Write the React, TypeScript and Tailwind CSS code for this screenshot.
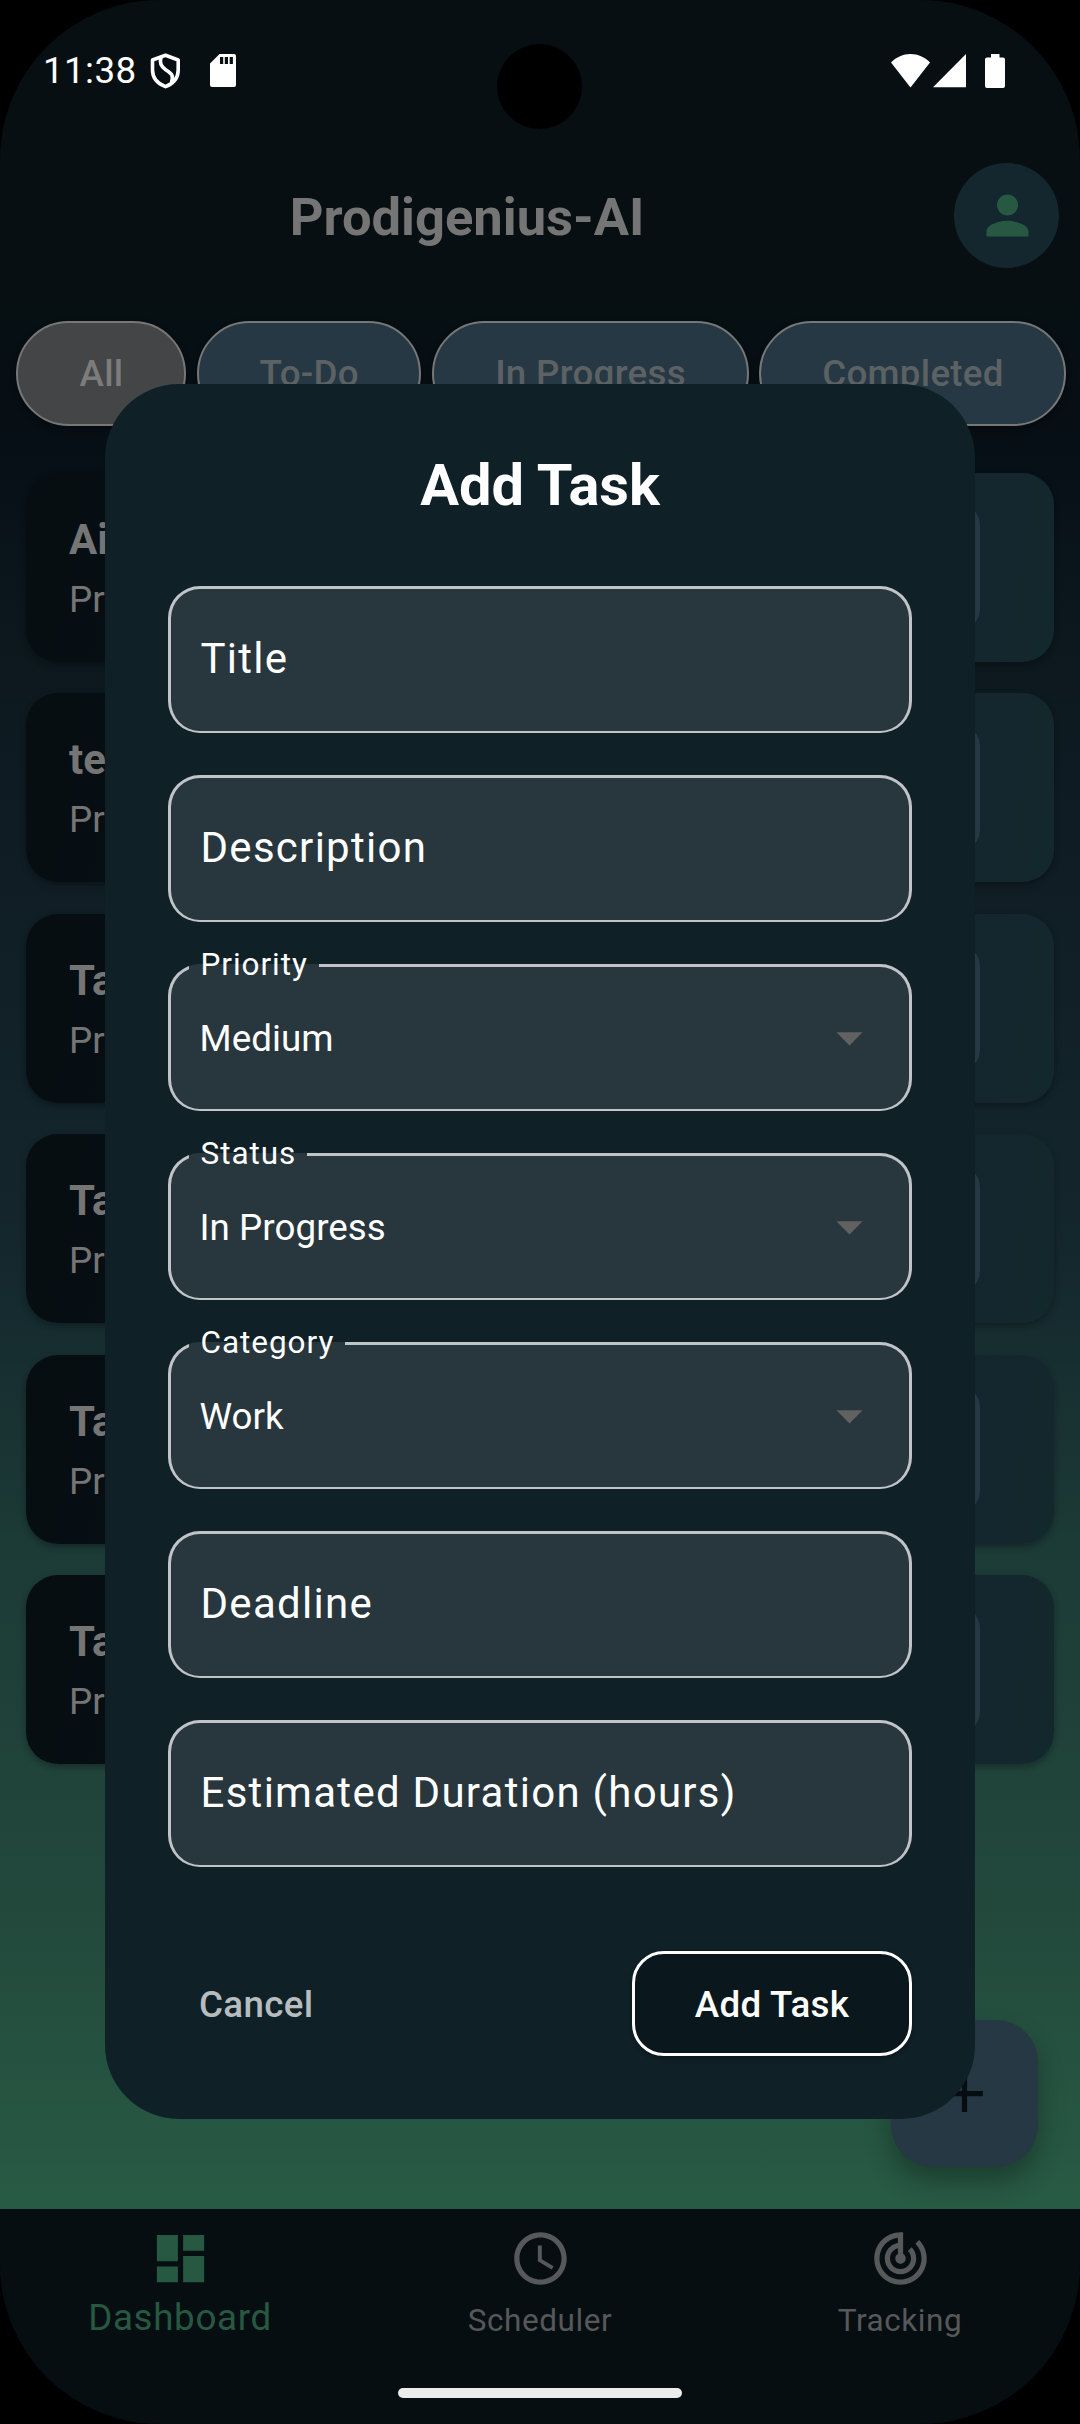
import type { ReactNode } from "react";
import { MdAccessTime, MdAdd, MdArrowDropDown, MdDashboard, MdPerson, MdTrackChanges } from "react-icons/md";

const chips = [
  { label: "All", box: "w-[170px] bg-[#444546] text-[#7c7c7c]" },
  { label: "To-Do", box: "w-[224.500px] bg-[#253843] text-[#5c6163]" },
  { label: "In Progress", box: "w-[317px] bg-[#253843] text-[#5c6163]" },
  { label: "Completed", box: "w-[307px] bg-[#253843] text-[#5c6163]" },
];

const tasks = ["Ai", "te", "Ta", "Ta", "Ta", "Ta"];

function StatusBar() {
  return (
    <div className="flex h-[142px] items-start justify-between pt-[49px] pr-[75px] pl-[43px]">
      <div className="flex items-center">
        <span className="w-[107px] text-[36.75px] leading-[43px] tracking-[0.4px] text-white">11:38</span>
        <svg className="mt-px h-[36px] w-[31px]" viewBox="0 0 31 36" fill="none" stroke="white" strokeWidth="3.6" strokeLinejoin="round">
          <path d="M15.5 2.3 28.2 7v10c0 7.500-4.600 13.500-12.700 16.700C7.400 30.500 2.500 24.500 2.500 17V7Z" />
          <path d="M11 4.500c-2 6 .500 9.500 5 12.500 5.500 3.500 8 5.500 5.500 12.500" />
        </svg>
        <svg className="ml-[29px] h-[33px] w-[26px]" viewBox="0 0 26 33" fill="white">
          <path fillRule="evenodd" d="M9.500 0H24a2 2 0 0 1 2 2v29a2 2 0 0 1-2 2H2a2 2 0 0 1-2-2V9.500ZM10 3v7h3.200V3Zm4.800 0v7H18V3Zm4.900 0v7h3.200V3Z" />
        </svg>
      </div>
      <div className="mt-[5px] flex">
        <svg className="h-[34px] w-[39px]" viewBox="0 0 39 34" fill="white">
          <path d="M0 8.500C5.500 3 12 0 19.500 0S33.500 3 39 8.500L19.500 33.500Z" />
        </svg>
        <svg className="ml-[3px] h-[34px] w-[33px]" viewBox="0 0 33 34" fill="white">
          <path d="M33 0v33.300H0Z" />
        </svg>
        <svg className="ml-[19px] h-[34px] w-[20px]" viewBox="0 0 20 34" fill="white">
          <path d="M6 0h8.500v3.500H18a2 2 0 0 1 2 2V32a2 2 0 0 1-2 2H2a2 2 0 0 1-2-2V5.500a2 2 0 0 1 2-2h4Z" />
        </svg>
      </div>
    </div>
  );
}

function Header() {
  return (
    <header className="h-[299px] shrink-0 bg-[#070f12]">
      <StatusBar />
      <div className="flex h-[147px] items-center pr-[21px]">
        <h1 className="flex-1 pt-[2px] pr-[20px] text-center text-[52.5px] leading-[62px] font-bold text-[#757575]">Prodigenius-AI</h1>
        <div className="flex size-[105px] items-center justify-center rounded-full bg-[#14262e] pl-[2px]">
          <MdPerson className="size-[63px] text-[#275942]" />
        </div>
      </div>
    </header>
  );
}

function TaskCard({ title }: { title: string }) {
  return (
    <div className="flex h-[189px] items-center justify-between rounded-[32px] bg-[linear-gradient(100deg,#060e11_0%,#070e14_12%,#14252e_88%,#13282d_100%)] pr-[74px] pl-[43px] shadow-[0_3px_6px_rgba(0,0,0,0.3)]">
      <div className="flex flex-col pt-[5px] text-[#757575]">
        <span className="text-[42px] leading-[59px] font-bold">{title}</span>
        <span className="text-[36.75px] leading-[61px]">Pr</span>
      </div>
      <div className="h-[126px] w-[126px] rounded-[21px] bg-[#253843]" />
    </div>
  );
}

function NavItem({ label, active, icon }: { label: string; active?: boolean; icon: ReactNode }) {
  return (
    <div className={active ? "flex flex-1 flex-col items-center text-[#275942]" : "flex flex-1 flex-col items-center text-[#565859]"}>
      {icon}
      {active ? (
        <span className="mt-[6px] text-[36.75px] leading-[43px] tracking-[0.66px]">{label}</span>
      ) : (
        <span className="mt-[12px] text-[31.5px] leading-[37px] tracking-[0.56px]">{label}</span>
      )}
    </div>
  );
}

function Field({ label }: { label: string }) {
  return (
    <div className="flex h-[147px] items-center rounded-[32px] border-[3px] border-b-2 border-[#c0c4c8] bg-[#28363d] pb-[3px] pl-[29.500px] text-[42px] leading-[49px] tracking-[1.28px] text-white">
      {label}
    </div>
  );
}

function SelectField({ label, value }: { label: string; value: string }) {
  return (
    <fieldset className="h-[147px] rounded-[32px] border-[3px] border-b-2 border-[#c0c4c8] bg-[#28363d] px-[18px]">
      <legend className="flex h-[3px] items-center pr-[11px] pl-[11.500px] text-[31.5px] tracking-[0.95px] text-white shadow-[0_3px_0_#28363d]">
        <span className="-mt-[2px] leading-[37px]">{label}</span>
      </legend>
      <div className="flex h-[142px] items-center justify-between pr-[10px] pl-[10.500px]">
        <span className="text-[36.75px] leading-[43px] tracking-[0.05px] text-white">{value}</span>
        <MdArrowDropDown className="-mt-[2px] size-[63px] text-[#616161]" />
      </div>
    </fieldset>
  );
}

function AddTaskDialog() {
  return (
    <div className="absolute top-[384px] left-[105px] flex h-[1735px] w-[870px] flex-col rounded-[74px] bg-[#0f2027] px-[63px] pb-[63px]">
      <h2 className="h-[202px] pt-[67px] text-center text-[57.75px] leading-[68px] font-bold text-white">Add Task</h2>
      <div className="flex flex-col gap-[42px]">
        <Field label="Title" />
        <Field label="Description" />
        <SelectField label="Priority" value="Medium" />
        <SelectField label="Status" value="In Progress" />
        <SelectField label="Category" value="Work" />
        <Field label="Deadline" />
        <Field label="Estimated Duration (hours)" />
      </div>
      <div className="mt-[84px] flex items-center justify-between text-[36.75px] leading-[43px] font-medium tracking-[0.3px]">
        <button className="pt-[2px] pl-[31px] text-[#b7bcbe]">Cancel</button>
        <button className="h-[105px] w-[280px] rounded-[32px] border-[3px] border-white bg-[#0a171c] pt-[2px] text-white shadow-[0_2px_5px_rgba(0,0,0,0.3)]">Add Task</button>
      </div>
    </div>
  );
}

export default function App() {
  return (
    <div className="h-[2424px] w-[1080px] overflow-hidden bg-black font-[Roboto,sans-serif]">
      <div className="relative flex h-full flex-col overflow-hidden rounded-[160px] bg-[#070f12]">
        <Header />
        <main className="flex h-[1910px] shrink-0 flex-col bg-[linear-gradient(180deg,#060f12_0%,#070f16_8%,#0c181e_18%,#101e25_33%,#14272d_50%,#1c3a36_65%,#22483c_84%,#285b44_100%)]">
          <div className="flex gap-[10.500px] pt-[22px] pl-[16px]">
            {chips.map((c) => (
              <div
                key={c.label}
                className={`${c.box} flex h-[105px] shrink-0 items-center justify-center rounded-full border-2 border-[#777777] pl-px text-[36.75px] leading-[43px] font-medium tracking-[0.26px] shadow-[0_3px_6px_rgba(0,0,0,0.35)]`}
              >
                {c.label}
              </div>
            ))}
          </div>
          <div className="flex flex-col gap-[31.500px] px-[26px] pt-[46.600px]">
            {tasks.map((t, i) => (
              <TaskCard key={i} title={t} />
            ))}
          </div>
        </main>
        <nav className="flex h-[215px] shrink-0 bg-[#060e11] pt-[18px]">
          <NavItem active label="Dashboard" icon={<MdDashboard className="size-[63px]" />} />
          <NavItem label="Scheduler" icon={<MdAccessTime className="size-[63px]" />} />
          <NavItem label="Tracking" icon={<MdTrackChanges className="size-[63px]" />} />
        </nav>
        <div className="absolute top-[2020px] left-[891px] flex size-[147px] items-center justify-center rounded-[42px] bg-[#253843] shadow-[0_14px_26px_rgba(0,0,0,0.3)]">
          <MdAdd className="size-[63px] text-[#060d10]" />
        </div>
        <AddTaskDialog />
        <div className="absolute top-[44px] left-[497px] size-[85px] rounded-full bg-black" />
        <div className="absolute top-[2388px] left-[398px] h-[10px] w-[284px] rounded-full bg-[#ececec]" />
      </div>
    </div>
  );
}
